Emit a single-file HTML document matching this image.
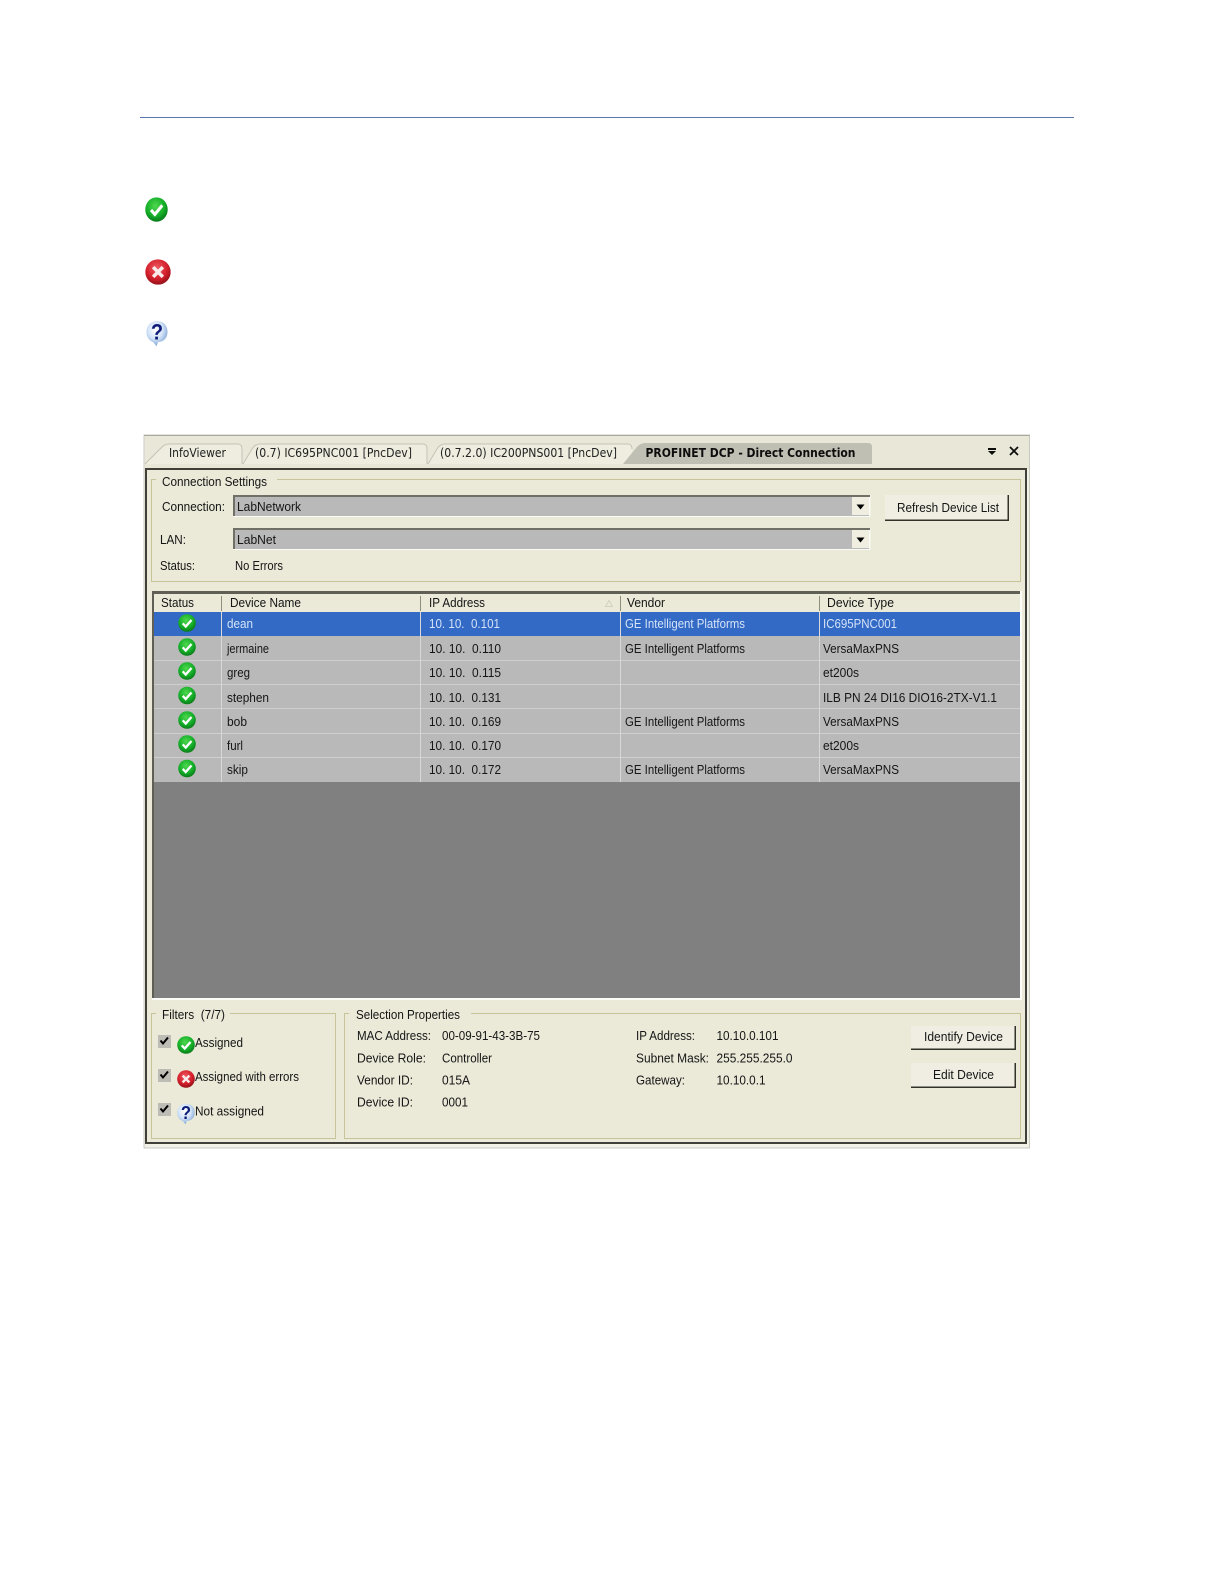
<!DOCTYPE html>
<html><head><meta charset="utf-8"><style>
html,body{margin:0;padding:0;background:#fff;width:1224px;height:1584px;overflow:hidden}
svg{display:block}
text{font-family:"Liberation Sans",sans-serif;font-size:12.5px;fill:#141414}
.t{font-family:"DejaVu Sans",sans-serif;font-size:12px;fill:#202020}
.b{font-family:"DejaVu Sans",sans-serif;font-size:12px;font-weight:bold;fill:#111}
.s{fill:#d6e3f8}
</style></head><body>
<svg width="1224" height="1584" viewBox="0 0 1224 1584" xmlns="http://www.w3.org/2000/svg">
<defs>
<filter id="soft" x="-2%" y="-2%" width="104%" height="104%"><feGaussianBlur stdDeviation="0.32"/></filter>
<radialGradient id="gg" cx="45%" cy="35%" r="70%"><stop offset="0" stop-color="#4fd84f"/><stop offset=".6" stop-color="#14ad28"/><stop offset="1" stop-color="#067016"/></radialGradient>
<radialGradient id="rg" cx="45%" cy="35%" r="70%"><stop offset="0" stop-color="#ee5a62"/><stop offset=".6" stop-color="#d31f2b"/><stop offset="1" stop-color="#861016"/></radialGradient>
<radialGradient id="bg" cx="42%" cy="35%" r="72%"><stop offset="0" stop-color="#fff"/><stop offset=".5" stop-color="#d2e3f8"/><stop offset="1" stop-color="#6f98cc"/></radialGradient>
<symbol id="ok" viewBox="0 0 24 24" preserveAspectRatio="none"><circle cx="12" cy="12" r="11.700" fill="url(#gg)"/><path d="M6.300 12.500l4 4.200L18 8" fill="none" stroke="#fff" stroke-width="3.100"/></symbol>
<symbol id="err" viewBox="0 0 24 24" preserveAspectRatio="none"><circle cx="12" cy="12" r="11.700" fill="url(#rg)"/><path d="M7.500 7.500l9 9M16.500 7.500l-9 9" fill="none" stroke="#fbeaea" stroke-width="3.200"/></symbol>
<symbol id="q" viewBox="0 0 24 24" preserveAspectRatio="none"><path d="M12 1C5.500 1 1.500 5 1.500 10.500c0 5 3 8 6.500 9l3.500 3.800 1.500-3.600c6-.3 9.500-4 9.500-9.200C22.500 5 18.500 1 12 1z" fill="url(#bg)"/><text x="12" y="17.500" text-anchor="middle" style="font-family:'Liberation Sans',sans-serif;font-size:20px;font-weight:bold;fill:#101c78">?</text></symbol>
</defs>
<rect width="1224" height="1584" fill="#fff"/>
<rect x="140" y="117" width="934" height="1" fill="#5a76ae"/>

<g filter="url(#soft)">
<use href="#ok" x="145" y="197" width="23" height="25"/>
<use href="#err" x="145" y="259" width="26" height="26"/>
<use href="#q" x="145" y="320" width="24" height="27"/>

<!-- panel -->
<rect x="144" y="435" width="885.500" height="713" fill="#f2f1e8" stroke="#bdbcb2" stroke-width=".8"/>
<rect x="145" y="436" width="884" height="33" fill="#e9e7d7"/>
<rect x="144" y="435" width="886" height="1" fill="#a8a89c"/>
<!-- tabs -->
<path d="M145 464L162 447Q165 444 169 444H242V464Z" fill="#efeddf"/>
<path d="M145 464L162 447Q165 444 169 444H238Q242 444 242 449V464" fill="none" stroke="#c4c3b4"/>
<path d="M243 464L252 449Q255 444 260 444H427V464Z" fill="#efeddf"/>
<path d="M243 464L252 449Q255 444 260 444H423Q427 444 427 449V464" fill="none" stroke="#c4c3b4"/>
<path d="M428 464L437 449Q440 444 445 444H632V464Z" fill="#efeddf"/>
<path d="M428 464L437 449Q440 444 445 444H628Q632 444 632 449" fill="none" stroke="#c4c3b4"/>
<path d="M623 464L636 448Q640 443 645 443H868Q872 443 872 447V464Z" fill="#c0bfb3"/>
<text class="t" x="169" y="457" textLength="57" lengthAdjust="spacingAndGlyphs">InfoViewer</text>
<text class="t" x="255" y="457" textLength="157" lengthAdjust="spacingAndGlyphs">(0.7) IC695PNC001 [PncDev]</text>
<text class="t" x="440" y="457" textLength="177" lengthAdjust="spacingAndGlyphs">(0.7.2.0) IC200PNS001 [PncDev]</text>
<text class="b" x="645.500" y="457" textLength="210" lengthAdjust="spacingAndGlyphs">PROFINET DCP - Direct Connection</text>
<rect x="988" y="448" width="8" height="2" fill="#111"/><path d="M988 451h8l-4 4z" fill="#111"/>
<path d="M1010 447l8 8M1018 447l-8 8" stroke="#111" stroke-width="1.800"/>

<!-- frame -->
<rect x="145" y="468" width="882" height="676" fill="#3f3f39"/>
<rect x="147" y="470" width="878" height="672" fill="#ebe9d8"/>

<!-- connection group -->
<rect x="151.500" y="479.500" width="869" height="102" fill="none" stroke="#c6c498"/>
<rect x="156" y="476" width="121" height="8" fill="#ebe9d8"/>
<text x="162" y="486" textLength="105" lengthAdjust="spacingAndGlyphs">Connection Settings</text>
<text x="162" y="511" textLength="63" lengthAdjust="spacingAndGlyphs">Connection:</text>
<rect x="233" y="495" width="637.500" height="22" fill="#fbfbf6"/>
<rect x="233" y="495" width="637" height="2" fill="#6f6f66"/><rect x="233" y="495" width="2" height="21" fill="#6f6f66"/>
<rect x="235" y="497" width="634" height="19" fill="#b9b9b9"/>
<rect x="852" y="497" width="17" height="18" fill="#efeee0"/><path d="M856.500 504.500h8l-4 5z" fill="#000"/>
<text x="237" y="511" textLength="64" lengthAdjust="spacingAndGlyphs">LabNetwork</text>
<text x="160" y="544" textLength="26" lengthAdjust="spacingAndGlyphs">LAN:</text>
<rect x="233" y="528" width="637.500" height="22" fill="#fbfbf6"/>
<rect x="233" y="528" width="637" height="2" fill="#6f6f66"/><rect x="233" y="528" width="2" height="21" fill="#6f6f66"/>
<rect x="235" y="530" width="634" height="19" fill="#b9b9b9"/>
<rect x="852" y="530" width="17" height="18" fill="#efeee0"/><path d="M856.500 537.500h8l-4 5z" fill="#000"/>
<text x="237" y="544" textLength="39" lengthAdjust="spacingAndGlyphs">LabNet</text>
<text x="160" y="570" textLength="35" lengthAdjust="spacingAndGlyphs">Status:</text>
<text x="235" y="570" textLength="48" lengthAdjust="spacingAndGlyphs">No Errors</text>
<rect x="885" y="495" width="124" height="26" fill="#33332c"/>
<rect x="885" y="495" width="122.500" height="24.500" fill="#f0eee2"/>
<text x="897" y="512" textLength="102" lengthAdjust="spacingAndGlyphs">Refresh Device List</text>

<!-- list -->
<rect x="152" y="591" width="870" height="409" fill="#fcfcf8"/>
<rect x="152" y="591" width="868" height="3" fill="#5f5f57"/>
<rect x="152" y="591" width="2" height="407" fill="#5f5f57"/>
<rect x="154" y="594" width="866" height="404" fill="#808080"/>
<rect x="154" y="594" width="866" height="18" fill="#ebe9d8"/>
<g fill="#8f8e80"><rect x="221" y="596" width="1" height="15"/><rect x="420" y="596" width="1" height="15"/><rect x="620" y="596" width="1" height="15"/><rect x="819" y="596" width="1" height="15"/></g>
<text x="161" y="607" textLength="33" lengthAdjust="spacingAndGlyphs">Status</text>
<text x="230" y="607" textLength="71" lengthAdjust="spacingAndGlyphs">Device Name</text>
<text x="429" y="607" textLength="56" lengthAdjust="spacingAndGlyphs">IP Address</text>
<path d="M605.500 606.500l3.500-6 3.500 6z" fill="none" stroke="#d2d0bf"/>
<text x="627" y="607" textLength="38" lengthAdjust="spacingAndGlyphs">Vendor</text>
<text x="827" y="607" textLength="67" lengthAdjust="spacingAndGlyphs">Device Type</text>

<!-- rows -->
<rect x="154" y="612" width="866" height="24" fill="#316ac5"/>
<rect x="154" y="636" width="866" height="146" fill="#b9b9b9"/>
<g fill="#cfcfcf"><rect x="154" y="660" width="866" height="1"/><rect x="154" y="684" width="866" height="1"/><rect x="154" y="708" width="866" height="1"/><rect x="154" y="733" width="866" height="1"/><rect x="154" y="757" width="866" height="1"/></g>
<g fill="#d8d8d8"><rect x="221" y="612" width="1" height="170"/><rect x="420" y="612" width="1" height="170"/><rect x="620" y="612" width="1" height="170"/><rect x="819" y="612" width="1" height="170"/></g>

<use href="#ok" x="178" y="614" width="18" height="18"/>
<use href="#ok" x="178" y="638" width="18" height="18"/>
<use href="#ok" x="178" y="662" width="18" height="18"/>
<use href="#ok" x="178" y="686.500" width="18" height="18"/>
<use href="#ok" x="178" y="711" width="18" height="18"/>
<use href="#ok" x="178" y="735" width="18" height="18"/>
<use href="#ok" x="178" y="759.500" width="18" height="18"/>

<text class="s" x="227" y="628" textLength="26" lengthAdjust="spacingAndGlyphs">dean</text>
<text class="s" x="429" y="628" textLength="71" lengthAdjust="spacingAndGlyphs" xml:space="preserve">10. 10.  0.101</text>
<text class="s" x="625" y="628" textLength="120" lengthAdjust="spacingAndGlyphs">GE Intelligent Platforms</text>
<text class="s" x="823" y="628" textLength="74" lengthAdjust="spacingAndGlyphs">IC695PNC001</text>

<text x="227" y="653" textLength="42" lengthAdjust="spacingAndGlyphs">jermaine</text>
<text x="429" y="653" textLength="72" lengthAdjust="spacingAndGlyphs" xml:space="preserve">10. 10.  0.110</text>
<text x="625" y="653" textLength="120" lengthAdjust="spacingAndGlyphs">GE Intelligent Platforms</text>
<text x="823" y="653" textLength="76" lengthAdjust="spacingAndGlyphs">VersaMaxPNS</text>

<text x="227" y="677" textLength="23" lengthAdjust="spacingAndGlyphs">greg</text>
<text x="429" y="677" textLength="72" lengthAdjust="spacingAndGlyphs" xml:space="preserve">10. 10.  0.115</text>
<text x="823" y="677" textLength="36" lengthAdjust="spacingAndGlyphs">et200s</text>

<text x="227" y="702" textLength="42" lengthAdjust="spacingAndGlyphs">stephen</text>
<text x="429" y="702" textLength="72" lengthAdjust="spacingAndGlyphs" xml:space="preserve">10. 10.  0.131</text>
<text x="823" y="702" textLength="174" lengthAdjust="spacingAndGlyphs">ILB PN 24 DI16 DIO16-2TX-V1.1</text>

<text x="227" y="726" textLength="20" lengthAdjust="spacingAndGlyphs">bob</text>
<text x="429" y="726" textLength="72" lengthAdjust="spacingAndGlyphs" xml:space="preserve">10. 10.  0.169</text>
<text x="625" y="726" textLength="120" lengthAdjust="spacingAndGlyphs">GE Intelligent Platforms</text>
<text x="823" y="726" textLength="76" lengthAdjust="spacingAndGlyphs">VersaMaxPNS</text>

<text x="227" y="750" textLength="16" lengthAdjust="spacingAndGlyphs">furl</text>
<text x="429" y="750" textLength="72" lengthAdjust="spacingAndGlyphs" xml:space="preserve">10. 10.  0.170</text>
<text x="823" y="750" textLength="36" lengthAdjust="spacingAndGlyphs">et200s</text>

<text x="227" y="774" textLength="21" lengthAdjust="spacingAndGlyphs">skip</text>
<text x="429" y="774" textLength="72" lengthAdjust="spacingAndGlyphs" xml:space="preserve">10. 10.  0.172</text>
<text x="625" y="774" textLength="120" lengthAdjust="spacingAndGlyphs">GE Intelligent Platforms</text>
<text x="823" y="774" textLength="76" lengthAdjust="spacingAndGlyphs">VersaMaxPNS</text>

<!-- filters -->
<rect x="151.500" y="1013.500" width="184" height="125" fill="none" stroke="#c6c498"/>
<rect x="156" y="1010" width="74" height="8" fill="#ebe9d8"/>
<text x="162" y="1019" textLength="63" lengthAdjust="spacingAndGlyphs" xml:space="preserve">Filters  (7/7)</text>
<g fill="#bdbdb5"><rect x="158" y="1035" width="13" height="13"/><rect x="158" y="1069" width="13" height="13"/><rect x="158" y="1103" width="13" height="13"/></g>
<g fill="none" stroke="#000" stroke-width="2"><path d="M160.500 1040.500l2.500 3 5-6"/><path d="M160.500 1074.500l2.500 3 5-6"/><path d="M160.500 1108.500l2.500 3 5-6"/></g>
<use href="#ok" x="177" y="1036" width="18" height="18"/>
<use href="#err" x="177" y="1070" width="18" height="18"/>
<use href="#q" x="176" y="1103" width="20" height="22"/>
<text x="195" y="1047" textLength="48" lengthAdjust="spacingAndGlyphs">Assigned</text>
<text x="195" y="1081" textLength="104" lengthAdjust="spacingAndGlyphs">Assigned with errors</text>
<text x="195" y="1115.500" textLength="69" lengthAdjust="spacingAndGlyphs">Not assigned</text>

<!-- selection -->
<rect x="344.500" y="1013.500" width="676" height="125" fill="none" stroke="#c6c498"/>
<rect x="349" y="1010" width="122" height="8" fill="#ebe9d8"/>
<text x="356" y="1019" textLength="104" lengthAdjust="spacingAndGlyphs">Selection Properties</text>
<text x="357" y="1040" textLength="74" lengthAdjust="spacingAndGlyphs">MAC Address:</text>
<text x="357" y="1062.500" textLength="69" lengthAdjust="spacingAndGlyphs">Device Role:</text>
<text x="357" y="1084.500" textLength="56" lengthAdjust="spacingAndGlyphs">Vendor ID:</text>
<text x="357" y="1106.500" textLength="56" lengthAdjust="spacingAndGlyphs">Device ID:</text>
<text x="442" y="1040" textLength="98" lengthAdjust="spacingAndGlyphs">00-09-91-43-3B-75</text>
<text x="442" y="1062.500" textLength="50" lengthAdjust="spacingAndGlyphs">Controller</text>
<text x="442" y="1084.500" textLength="28" lengthAdjust="spacingAndGlyphs">015A</text>
<text x="442" y="1106.500" textLength="26" lengthAdjust="spacingAndGlyphs">0001</text>
<text x="636" y="1040" textLength="59" lengthAdjust="spacingAndGlyphs">IP Address:</text>
<text x="636" y="1062.500" textLength="73" lengthAdjust="spacingAndGlyphs">Subnet Mask:</text>
<text x="636" y="1084.500" textLength="49" lengthAdjust="spacingAndGlyphs">Gateway:</text>
<text x="716.500" y="1040" textLength="62" lengthAdjust="spacingAndGlyphs">10.10.0.101</text>
<text x="716.500" y="1062.500" textLength="76" lengthAdjust="spacingAndGlyphs">255.255.255.0</text>
<text x="716.500" y="1084.500" textLength="49" lengthAdjust="spacingAndGlyphs">10.10.0.1</text>
<rect x="911" y="1026" width="105" height="24" fill="#33332c"/>
<rect x="911" y="1026" width="103.500" height="22.500" fill="#f0eee2"/>
<text x="924" y="1041" textLength="79" lengthAdjust="spacingAndGlyphs">Identify Device</text>
<rect x="911" y="1063" width="105" height="25" fill="#33332c"/>
<rect x="911" y="1063" width="103.500" height="23.500" fill="#f0eee2"/>
<text x="933" y="1079" textLength="61" lengthAdjust="spacingAndGlyphs">Edit Device</text>
</g>
</svg>
</body></html>
